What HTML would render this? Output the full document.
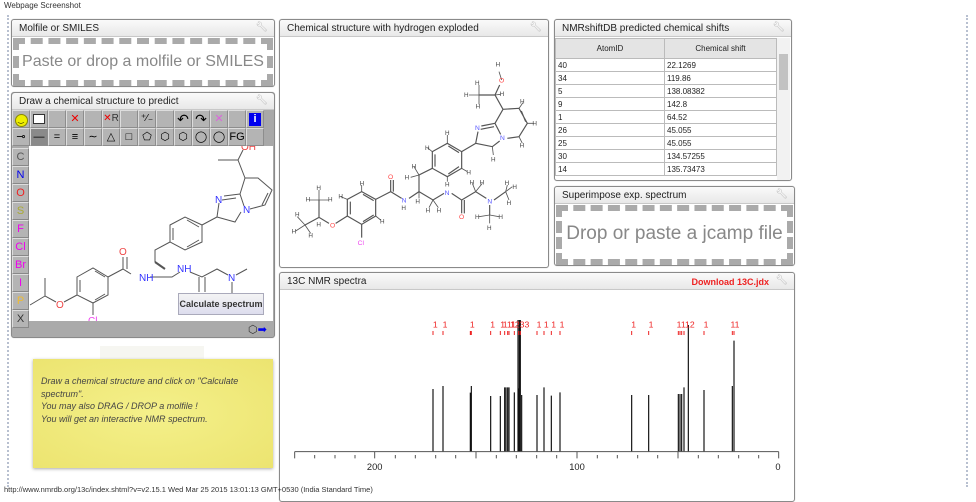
<!DOCTYPE html>
<html><head><meta charset="utf-8"><style>
*{box-sizing:border-box;margin:0;padding:0}
body{width:976px;height:494px;background:#fff;font-family:"Liberation Sans",sans-serif;position:relative;overflow:hidden}
.a{position:absolute}
.panel{position:absolute;border:1px solid #8a8a8a;border-radius:3px;background:#fff;box-shadow:0 0 1px #bbb}
.hd{position:absolute;left:0;right:0;top:0;height:17px;background:linear-gradient(#fafafa,#e8e8e8);border-bottom:1px solid #c8c8c8;font-size:10px;color:#222;padding:3px 0 0 7px;border-radius:3px 3px 0 0;white-space:nowrap}
.wr{position:absolute;right:6px;top:2px;color:#bbb;font-size:10px}
.drop{position:absolute;border:6px dashed #aaa;background:#fff;color:#888;text-align:center;white-space:nowrap;overflow:hidden}
.tb{position:absolute;width:18px;height:18px;background:#b4b4b4;border:1px solid #8d8d8d;border-top-color:#ddd;border-left-color:#ddd;font-size:11px;text-align:center;line-height:16px}
.el{position:absolute;left:12px;width:17px;height:18px;background:#b4b4b4;border:1px solid #888;border-top-color:#ddd;border-left-color:#ddd;font-size:11px;text-align:center;line-height:16px}
table{border-collapse:collapse;font-size:8px;color:#222}
td{border:1px solid #bbb;height:13px;padding:0 2px}
</style></head><body>
<div class="a" style="left:4px;top:1px;font-size:8px;color:#333">Webpage Screenshot</div>
<div class="a" style="left:7px;top:15px;width:3px;height:472px;border-left:2px dotted #b8c0d0"></div>
<div class="a" style="left:966px;top:15px;width:3px;height:472px;border-left:2px dotted #b8c0d0"></div>

<!-- Panel 1 -->
<div class="panel" style="left:11px;top:19px;width:264px;height:68px">
<div class="hd">Molfile or SMILES<span class="wr">&#x1F527;&#xFE0E;</span></div>
<div class="drop" style="left:1px;top:18px;width:260px;height:48px;font-size:16px;line-height:36px">Paste or drop a molfile or SMILES</div>
</div>

<!-- Panel 2 -->
<div class="panel" style="left:11px;top:92px;width:264px;height:246px;background:#aaa">
<div class="hd">Draw a chemical structure to predict<span class="wr">&#x1F527;&#xFE0E;</span></div>
</div>
<div class="a" style="left:12px;top:110px;width:262px;height:36px;background:#a8a8a8"></div>
<div class="tb" style="left:12px;top:110px"><span style="display:inline-block;width:13px;height:13px;border-radius:50%;background:#ee0;border:1px solid #880;margin-top:1px;font-size:7px;line-height:11px">‿</span></div>
<div class="tb" style="left:30px;top:110px"><span style="display:inline-block;width:12px;height:10px;background:#fff;border:1px solid #333;margin-top:3px"></span></div>
<div class="tb" style="left:48px;top:110px"></div>
<div class="tb" style="left:66px;top:110px;color:#e00">✕</div>
<div class="tb" style="left:84px;top:110px"></div>
<div class="tb" style="left:102px;top:110px;color:#e00;font-size:10px">✕<span style="color:#333">R</span></div>
<div class="tb" style="left:120px;top:110px"></div>
<div class="tb" style="left:138px;top:110px;font-size:10px">⁺⁄₋</div>
<div class="tb" style="left:156px;top:110px"></div>
<div class="tb" style="left:174px;top:110px;font-size:14px">↶</div>
<div class="tb" style="left:192px;top:110px;font-size:14px">↷</div>
<div class="tb" style="left:210px;top:110px;color:#d6d">✕</div>
<div class="tb" style="left:228px;top:110px"></div>
<div class="tb" style="left:246px;top:110px"><span style="display:inline-block;width:12px;height:13px;background:#00e;color:#fff;font-weight:bold;line-height:13px;margin-top:1px">i</span></div>
<div class="tb" style="left:12px;top:128px">⊸</div>
<div class="tb" style="left:30px;top:128px;background:#8a8a8a">—</div>
<div class="tb" style="left:48px;top:128px">=</div>
<div class="tb" style="left:66px;top:128px">≡</div>
<div class="tb" style="left:84px;top:128px">∼</div>
<div class="tb" style="left:102px;top:128px">△</div>
<div class="tb" style="left:120px;top:128px">□</div>
<div class="tb" style="left:138px;top:128px">⬠</div>
<div class="tb" style="left:156px;top:128px">⬡</div>
<div class="tb" style="left:174px;top:128px">⬡</div>
<div class="tb" style="left:192px;top:128px">◯</div>
<div class="tb" style="left:210px;top:128px">◯</div>
<div class="tb" style="left:228px;top:128px">FG</div>
<div class="tb" style="left:246px;top:128px"></div>
<div class="el" style="top:148px;color:#555">C</div>
<div class="el" style="top:166px;color:#00e">N</div>
<div class="el" style="top:184px;color:#e22">O</div>
<div class="el" style="top:202px;color:#aa3">S</div>
<div class="el" style="top:220px;color:#e0e">F</div>
<div class="el" style="top:238px;color:#e0e">Cl</div>
<div class="el" style="top:256px;color:#e0e">Br</div>
<div class="el" style="top:274px;color:#e0e">I</div>
<div class="el" style="top:292px;color:#eb3">P</div>
<div class="el" style="top:310px;color:#333">X</div>
<div class="a" style="left:29px;top:146px;width:244px;height:175px;background:#fff;overflow:hidden">
<svg class="a" style="left:-29px;top:-146px" width="280" height="340" viewBox="0 0 280 340" stroke="#555" stroke-width="1" fill="none" font-family="Liberation Sans" font-size="10">
<path d="M170 225L185 217L202 225L202 242L185 250L170 242Z M173 228V240 M187 220L199 227 M187 247L199 240"/>
<path d="M170 242L155 250L155 262 M150 277L172 277L180 272 M190 272L202 277L217 269L228 275 M236 275L247 269 M232 282V293 M199 277V292 M205 277V292"/>
<path d="M131 274L123 269V257 M127 269V257 M123 269L108 277"/>
<path d="M77 277L93 268L108 277L108 295L93 303L77 295Z M80 280V292 M95 300L105 294 M95 271L105 277 M77 295L64 302 M56 302L45 296V278 M45 296L30 305 M93 303V315"/>
<path d="M202 225L217 217L219 203 M224 196L240 194 M222 200L236 198 M240 194L244 206 M241 212L235 222L217 217 M240 194L245 178 M250 209L265 205L272 190L258 178L245 178 M262 205L268 193"/>
<path d="M245 178L238 160L218 160 M238 160L243 150"/>
<path d="M155 262L165 269" stroke-width="2"/>
<g stroke="none" fill="#33f"><text x="139" y="281">NH</text><text x="177" y="272">NH</text><text x="228" y="281">N</text><text x="215" y="203">N</text><text x="243" y="213">N</text></g>
<g stroke="none" fill="#e44"><text x="119" y="255">O</text><text x="56" y="308">O</text><text x="241" y="150">OH</text></g>
<text x="88" y="324" fill="#e4e" stroke="none">Cl</text>
</svg>
<div class="a" style="left:149px;top:147px;width:86px;height:22px;background:linear-gradient(#f4f4f4,#dde);border:1px solid #aab;font-size:9px;font-weight:bold;color:#333;text-align:center;line-height:20px">Calculate spectrum</div>
</div>
<div class="a" style="left:248px;top:323px;font-size:11px;color:#333">⬡<span style="color:#00e">➡</span></div>

<!-- sticky -->
<div class="a" style="left:100px;top:346px;width:104px;height:19px;background:rgba(245,245,240,.9)"></div>
<div class="a" style="left:33px;top:359px;width:240px;height:109px;background:radial-gradient(ellipse at 50% 50%,#f4f08a,#ece470);box-shadow:0 1px 3px #aaa;font-size:9px;font-style:italic;color:#444;padding:16px 8px;line-height:12.5px;font-family:'Liberation Sans',sans-serif">Draw a chemical structure and click on "Calculate spectrum".<br>You may also DRAG / DROP a molfile !<br>You will get an interactive NMR spectrum.</div>

<!-- Panel 3 -->
<div class="panel" style="left:279px;top:19px;width:270px;height:249px">
<div class="hd">Chemical structure with hydrogen exploded<span class="wr">&#x1F527;&#xFE0E;</span></div>
<svg class="a" style="left:-1px;top:-5px" width="275" height="260" viewBox="0 0 825 780" stroke="#555" stroke-width="3.5" fill="none" font-family="Liberation Sans" font-size="20">
<path d="M248 530L290 553L290 603L248 628L205 603L205 553Z M214 560V598 M252 620L284 600 M252 538L284 557"/>
<path d="M248 628V668 M205 603L170 625 M150 625L120 607V555 M120 607L78 630 M290 553L335 530V495 M343 530V495 M335 530L368 550 M390 550L420 530V480L460 460"/>
<path d="M460 410L505 385L548 410L548 460L505 485L460 460Z M468 418V455 M508 393L540 413 M508 477L540 455"/>
<path d="M548 410L590 385L597 350 M607 333L648 325 M605 343L645 335 M648 325L665 358 M662 378L640 395L590 385 M648 325L672 283L720 280L745 325L720 365L685 370 M727 288L740 320 M672 283L648 240L600 240 M648 240L662 210"/>
<path d="M420 530L462 555L495 535 M518 535L548 555V595 M556 555V595 M548 555L590 530L622 550 M645 555L680 530 M632 570V600"/>
<g stroke-width="2.5"><path d="M120 555V525 M120 555L150 555 M120 555L90 555 M78 630L55 605 M78 630L50 648 M78 630L95 655 M205 553L185 545 M248 530V510 M290 603L305 615 M420 480L405 455 M420 480L395 487 M420 530L420 550 M462 555L450 578 M462 555L478 578 M460 410L445 398 M505 385V360 M548 460L565 470 M505 485V500 M640 395L643 420 M720 280L732 263 M745 325L765 325 M720 365L730 385 M648 240L665 238 M600 240L600 210 M600 240L570 240 M600 240V268 M668 195L660 170 M590 530L580 505 M590 530L610 505 M680 530L685 510 M680 530L700 515 M680 530L690 555 M632 600L600 605 M632 600L660 605 M632 600V625"/></g>
<g stroke="none" fill="#444" font-size="19"><text x="112" y="525">H</text><text x="80" y="560">H</text><text x="147" y="560">H</text><text x="48" y="605">H</text><text x="38" y="655">H</text><text x="88" y="668">H</text><text x="112" y="635">H</text><text x="178" y="550">H</text><text x="242" y="512">H</text><text x="303" y="625">H</text><text x="398" y="460">H</text><text x="377" y="493">H</text><text x="409" y="565">H</text><text x="440" y="592">H</text><text x="473" y="592">H</text><text x="438" y="405">H</text><text x="498" y="360">H</text><text x="562" y="478">H</text><text x="498" y="515">H</text><text x="636" y="440">H</text><text x="723" y="265">H</text><text x="760" y="332">H</text><text x="722" y="398">H</text><text x="662" y="243">H</text><text x="588" y="210">H</text><text x="555" y="246">H</text><text x="590" y="280">H</text><text x="650" y="155">H</text><text x="572" y="508">H</text><text x="602" y="508">H</text><text x="677" y="510">H</text><text x="700" y="522">H</text><text x="683" y="570">H</text><text x="588" y="612">H</text><text x="658" y="612">H</text><text x="624" y="645">H</text><text x="367" y="585">H</text></g>
<g stroke="none" fill="#55f"><text x="368" y="563">N</text><text x="497" y="540">N</text><text x="625" y="565">N</text><text x="588" y="345">N</text><text x="663" y="375">N</text></g>
<g stroke="none" fill="#f44"><text x="327" y="492">O</text><text x="540" y="612">O</text><text x="153" y="638">O</text><text x="660" y="203">O</text></g>
<text x="236" y="690" stroke="none" fill="#e4e">Cl</text>
</svg>
</div>

<!-- Panel 4 -->
<div class="panel" style="left:554px;top:19px;width:238px;height:162px">
<div class="hd">NMRshiftDB predicted chemical shifts<span class="wr">&#x1F527;&#xFE0E;</span></div>
<table class="a" style="left:0;top:18px;width:222px">
<tr style="background:#e4e4e4;height:20px"><td style="width:109px;text-align:center">AtomID</td><td style="text-align:center">Chemical shift</td></tr>
<tr><td>40</td><td>22.1269</td></tr><tr><td>34</td><td>119.86</td></tr><tr><td>5</td><td>138.08382</td></tr><tr><td>9</td><td>142.8</td></tr><tr><td>1</td><td>64.52</td></tr><tr><td>26</td><td>45.055</td></tr><tr><td>25</td><td>45.055</td></tr><tr><td>30</td><td>134.57255</td></tr><tr><td>14</td><td>135.73473</td></tr>
</table>
<div class="a" style="left:222px;top:18px;width:13px;height:142px;background:#f2f2f2"></div>
<div class="a" style="left:224px;top:34px;width:9px;height:36px;background:#c2c2c2"></div>
</div>

<!-- Panel 5 -->
<div class="panel" style="left:554px;top:186px;width:241px;height:80px">
<div class="hd">Superimpose exp. spectrum<span class="wr">&#x1F527;&#xFE0E;</span></div>
<div class="drop" style="left:1px;top:18px;width:237px;height:60px;font-size:19px;line-height:46px">Drop or paste a jcamp file</div>
</div>

<!-- Panel 6 -->
<div class="panel" style="left:279px;top:272px;width:516px;height:230px">
<div class="hd">13C NMR spectra<span class="a" style="right:25px;top:4px;color:#e22;font-size:9px;font-weight:bold">Download 13C.jdx</span><span class="wr">&#x1F527;&#xFE0E;</span></div>
</div>
<svg class="a" style="left:278px;top:270px" width="520" height="210" viewBox="0 0 1560 630" font-family="Liberation Sans">
<g stroke="#111" stroke-width="3.5">
<path d="M465 545V357 M495 545V348 M577 545V368 M580 545V348 M638 545V378 M667 545V378 M680 545V352 M684 545V352 M689 545V352 M693 545V352 M709 545V367 M720 545V150 M722 545V355 M724 545V150 M727 545V150 M731 545V375 M777 545V375 M798 545V352 M820 545V377 M846 545V367 M1061 545V375 M1112 545V375 M1201 545V372 M1206 545V372 M1211 545V372 M1218 545V352 M1231 545V165 M1278 545V360 M1363 545V348 M1368 545V212"/>
</g>
<g stroke="#555" stroke-width="3" fill="none"><path d="M50 545H1502 M50 545V565 M1502 545V565"/>
<path d="M110 555V565 M171 555V565 M231 555V565 M290 545V565 M352 555V565 M412 555V565 M473 555V565 M533 555V565 M594 545V565 M655 555V565 M715 555V565 M776 555V565 M836 555V565 M897 545V565 M958 555V565 M1018 555V565 M1079 555V565 M1139 555V565 M1200 545V565 M1261 555V565 M1321 555V565 M1382 555V565 M1442 555V565"/></g>
<g fill="#222" font-size="28" text-anchor="middle"><text x="290" y="600">200</text><text x="897" y="600">100</text><text x="1500" y="600">0</text></g>
<g fill="#e22" font-size="26" text-anchor="middle"><text x="472" y="173">1</text><text x="501" y="173">1</text><text x="583" y="173">1</text><text x="644" y="173">1</text><text x="674" y="173">1</text><text x="694" y="173">111</text><text x="725" y="173">1233</text><text x="783" y="173">1</text><text x="805" y="173">1</text><text x="827" y="173">1</text><text x="852" y="173">1</text><text x="1067" y="173">1</text><text x="1119" y="173">1</text><text x="1223" y="173">1112</text><text x="1284" y="173">1</text><text x="1371" y="173">11</text></g>
<g stroke="#e22" stroke-width="3"><path d="M465 183V195 M495 183V195 M577 183V195 M580 183V195 M638 183V195 M667 183V195 M680 183V195 M689 183V195 M693 183V195 M709 183V195 M722 183V195 M727 183V195 M777 183V195 M798 183V195 M820 183V195 M846 183V195 M1061 183V195 M1112 183V195 M1201 183V195 M1206 183V195 M1211 183V195 M1218 183V195 M1278 183V195 M1363 183V195 M1368 183V195"/></g>
</svg>
<div class="a" style="left:4px;top:485px;font-size:7.5px;color:#333">http://www.nmrdb.org/13c/index.shtml?v=v2.15.1 Wed Mar 25 2015 13:01:13 GMT+0530 (India Standard Time)</div>
</body></html>
